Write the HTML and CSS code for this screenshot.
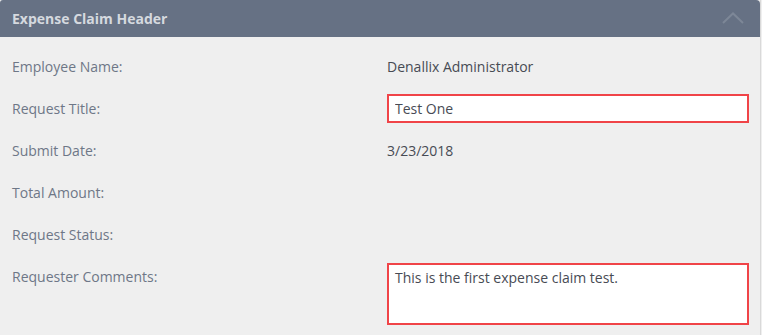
FILE: index.html
```html
<!DOCTYPE html>
<html lang="en">
<head>
  <meta charset="UTF-8">
  <meta name="viewport" content="width=device-width, initial-scale=1.0">
  <title>Expense Claim Header</title>
  <link rel="stylesheet" href="styles.css">
</head>
<body>

<div class="panel">
  <div class="panel-header">
    <span class="panel-title">Expense Claim Header</span>
    <svg class="chevron" width="22" height="12" viewBox="0 0 22 12">
      <polyline points="1,11 11,1.5 21,11" fill="none" stroke="#7d8797" stroke-width="2"/>
    </svg>
  </div>

  <div class="panel-body">
    <div class="row">
      <div class="label">Employee Name:</div>
      <div class="value">Denallix Administrator</div>
    </div>
    <div class="row">
      <div class="label">Request Title:</div>
      <div class="value"><input class="field" type="text" value="Test One"></div>
    </div>
    <div class="row">
      <div class="label">Submit Date:</div>
      <div class="value">3/23/2018</div>
    </div>
    <div class="row">
      <div class="label">Total Amount:</div>
      <div class="value"></div>
    </div>
    <div class="row">
      <div class="label">Request Status:</div>
      <div class="value"></div>
    </div>
    <div class="row row-top">
      <div class="label">Requester Comments:</div>
      <div class="value"><textarea class="field comments">This is the first expense claim test.</textarea></div>
    </div>
  </div>
</div>

</body>
</html>
```

FILE: styles.css
```css
body {
  margin: 0;
  background-color: #efefef;
  font-family: "Open Sans", Arial, sans-serif;
  font-size: 14px;
}
.panel {
  width: 760px;
  border-right: 1px solid #d9d9d9;
  min-height: 335px;
}
.panel-header {
  height: 37px;
  background-color: #667184;
  border-radius: 3px 4px 0 0;
  display: flex;
  align-items: center;
  justify-content: space-between;
  padding: 0 16px 0 12px;
}
.panel-title {
  color: #d5d9df;
  font-weight: bold;
  font-size: 14px;
}
.chevron {
  margin-top: -2px;
}
.panel-body {
  padding-top: 8px;
}
.row {
  display: grid;
  grid-template-columns: 387px 362px;
  height: 42px;
  align-items: center;
}
.row-top {
  align-items: start;
  height: auto;
}
.label {
  padding-left: 12px;
  color: #6e7787;
}
.row-top .label {
  padding-top: 12px;
}
.value {
  color: #474b54;
}
.field {
  box-sizing: border-box;
  width: 362px;
  height: 29px;
  border: 2px solid #f04448;
  background: #fff;
  font-family: inherit;
  font-size: 14px;
  color: #474b54;
  padding: 0 6px;
  margin: 0;
  display: block;
  outline: none;
}
.comments {
  height: 62px;
  margin-top: 8px;
  padding: 3px 6px;
  resize: none;
}
```
